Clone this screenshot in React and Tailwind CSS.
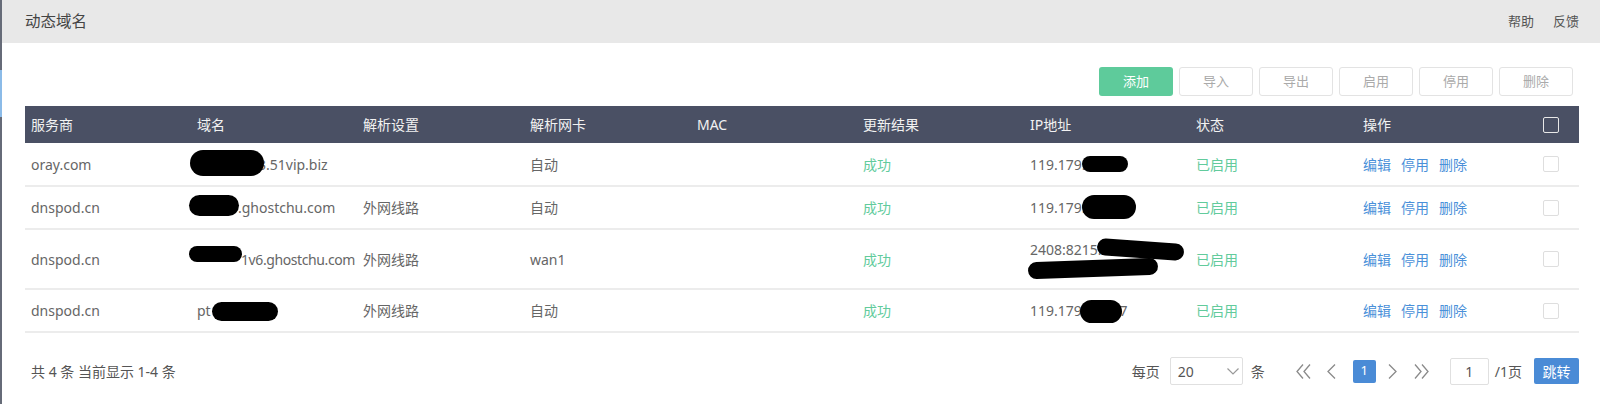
const cols = [
    { label: "服务商", w: "w-[166px]" },
    { label: "域名", w: "w-[166px]" },
    { label: "解析设置", w: "w-[167px]" },
    { label: "解析网卡", w: "w-[167px]" },
    { label: "MAC", w: "w-[166px]" },
    { label: "更新结果", w: "w-[167px]" },
    { label: "IP地址", w: "w-[166px]" },
    { label: "状态", w: "w-[167px]" },
    { label: "操作", w: "w-[166px]" },
];

// black marker strokes that hide parts of the text
function Blob({ className }) {
    return <span className={`absolute rounded-full bg-black ${className}`} />;
}

function Arrow({ double, right }) {
    const w = double ? 15 : 9;
    const d = double
        ? right
            ? "M1 0.5 L7 7.5 L1 14.5 M8 0.5 L14 7.5 L8 14.5"
            : "M7 0.5 L1 7.5 L7 14.5 M14 0.5 L8 7.5 L14 14.5"
        : right
          ? "M1 0.5 L8 7.5 L1 14.5"
          : "M8 0.5 L1 7.5 L8 14.5";
    return (
        <svg width={w} height="15" viewBox={`0 0 ${w} 15`} fill="none" stroke="#8a8a8a" strokeWidth="1.3">
            <path d={d} />
        </svg>
    );
}

const rows = [
    {
        vendor: "oray.com",
        domain: (
            <>
                <span className="pl-[61px]">3.51vip.biz</span>
                <Blob className="left-[-1px] top-[7px] h-[26px] w-[74px] rounded-[40%_50%_50%_45%]" />
            </>
        ),
        line: "",
        nic: "自动",
        ip: (
            <>
                <span>119.179.</span>
                <Blob className="left-[58px] top-[13px] h-[16px] w-[46px]" />
            </>
        ),
        h: "h-[43px]",
    },
    {
        vendor: "dnspod.cn",
        domain: (
            <>
                <span className="pl-[41px]">.ghostchu.com</span>
                <Blob className="left-[-2px] top-[8px] h-[21px] w-[50px]" />
            </>
        ),
        line: "外网线路",
        nic: "自动",
        ip: (
            <>
                <span>119.179.</span>
                <Blob className="left-[58px] top-[8px] h-[24px] w-[54px] rounded-[45%]" />
            </>
        ),
        h: "h-[43px]",
    },
    {
        vendor: "dnspod.cn",
        domain: (
            <>
                <span className="pl-[44px] tracking-[-0.4px]">1v6.ghostchu.com</span>
                <Blob className="left-[-2px] top-[16px] h-[16px] w-[53px]" />
            </>
        ),
        line: "外网线路",
        nic: "wan1",
        ip: (
            <>
                <span className="block leading-[19px]">2408:8215:</span>
                <span className="block leading-[19px]">&nbsp;</span>
                <Blob className="left-[73px] top-[11px] h-[17px] w-[87px] rotate-[4deg]" />
                <Blob className="left-[4px] top-[30px] h-[17px] w-[130px] -rotate-[2deg]" />
            </>
        ),
        h: "h-[60px]",
    },
    {
        vendor: "dnspod.cn",
        domain: (
            <>
                <span>pt</span>
                <Blob className="left-[21px] top-[12px] h-[19px] w-[66px]" />
            </>
        ),
        line: "外网线路",
        nic: "自动",
        ip: (
            <>
                <span>119.179.</span>
                <span className="pl-[34px]">7</span>
                <Blob className="left-[56px] top-[10px] h-[23px] w-[42px] rounded-[45%]" />
            </>
        ),
        h: "h-[43px]",
    },
];

const tools = ["导入", "导出", "启用", "停用", "删除"];

export default function App() {
    return (
        <div className="flex h-[404px] w-[1600px] overflow-hidden bg-white font-['Noto_Sans','Noto_Sans_CJK_SC',sans-serif] text-[14px] text-[#666]">
            <div className="flex w-[2px] flex-col">
                <div className="h-[70px] bg-[#666b78]" />
                <div className="h-[47px] bg-[#8bbbe8]" />
                <div className="flex-1 bg-[#666b78]" />
            </div>

            <div className="flex min-w-0 flex-1 flex-col">
                <header className="flex h-[43px] items-center justify-between bg-[#e8e8e8] pl-[23px] pr-[21px]">
                    <h1 className="text-[15.5px] text-[#444]">动态域名</h1>
                    <div className="flex gap-[19px] text-[13px] text-[#555]">
                        <span>帮助</span>
                        <span>反馈</span>
                    </div>
                </header>

                <div className="pl-[23px] pr-[21px]">
                    <div className="mt-[24px] flex justify-end gap-[6px] pr-[6px]">
                        <button
                            type="button"
                            className="h-[29px] w-[74px] rounded-[3px] bg-[#5ecb9b] text-[13px] text-white"
                        >
                            添加
                        </button>
                        {tools.map((t) => (
                            <button
                                key={t}
                                type="button"
                                className="h-[29px] w-[74px] rounded-[3px] border border-[#e3e3e3] bg-white text-[13px] text-[#aaa]"
                            >
                                {t}
                            </button>
                        ))}
                    </div>

                    <table className="mt-[10px] w-[1554px] table-fixed border-collapse">
                        <thead>
                            <tr className="h-[37px] bg-[#4a5064] text-left text-[14px] text-[#f2f2f2]">
                                {cols.map((c) => (
                                    <th key={c.label} className={`${c.w} pl-[6px] font-normal`}>
                                        {c.label}
                                    </th>
                                ))}
                                <th className="w-[56px]">
                                    <span className="mx-auto block h-[16px] w-[16px] rounded-[2px] border border-[#e8e8e8]" />
                                </th>
                            </tr>
                        </thead>
                        <tbody>
                            {rows.map((r, i) => (
                                <tr key={i} className={`${r.h} border-b-2 border-[#ececec]`}>
                                    <td className="pl-[6px]">{r.vendor}</td>
                                    <td className="relative pl-[6px]">{r.domain}</td>
                                    <td className="pl-[6px]">{r.line}</td>
                                    <td className="pl-[6px]">{r.nic}</td>
                                    <td className="pl-[6px]" />
                                    <td className="pl-[6px] text-[#62cb9c]">成功</td>
                                    <td className="relative pl-[6px]">{r.ip}</td>
                                    <td className="pl-[6px] text-[#62cb9c]">已启用</td>
                                    <td className="pl-[6px] text-[#4a90d9]">
                                        <span className="mr-[10px]">编辑</span>
                                        <span className="mr-[10px]">停用</span>
                                        <span>删除</span>
                                    </td>
                                    <td>
                                        <span className="mx-auto block h-[16px] w-[16px] rounded-[2px] border border-[#dedede]" />
                                    </td>
                                </tr>
                            ))}
                        </tbody>
                    </table>

                    <div className="mt-[24px] flex h-[28px] items-center justify-between pl-[6px] text-[14px] text-[#555]">
                        <span>共 4 条 当前显示 1-4 条</span>
                        <div className="flex items-center">
                            <span>每页</span>
                            <div className="ml-[10px] flex h-[28px] w-[73px] items-center justify-between rounded-[2px] border border-[#e0e0e0] pl-[7px] pr-[3px]">
                                <span>20</span>
                                <svg width="12" height="7" viewBox="0 0 12 7" fill="none" stroke="#999" strokeWidth="1.2">
                                    <path d="M0.5 0.5 L6 6 L11.5 0.5" />
                                </svg>
                            </div>
                            <span className="ml-[8px]">条</span>
                            <div className="ml-[31px] flex items-center">
                                <Arrow double />
                                <span className="ml-[16px]">
                                    <Arrow />
                                </span>
                                <span className="ml-[17px] flex h-[23px] w-[23px] items-center justify-center rounded-[2px] bg-[#4a8bd6] text-[13px] text-white">
                                    1
                                </span>
                                <span className="ml-[12px]">
                                    <Arrow right />
                                </span>
                                <span className="ml-[17px]">
                                    <Arrow double right />
                                </span>
                            </div>
                            <div className="ml-[21px] flex h-[27px] w-[39px] items-center justify-center rounded-[2px] border border-[#e0e0e0]">
                                1
                            </div>
                            <span className="ml-[6px]">/1页</span>
                            <button
                                type="button"
                                className="ml-[12px] h-[26px] w-[45px] rounded-[2px] bg-[#4a8bd6] text-[14px] text-white"
                            >
                                跳转
                            </button>
                        </div>
                    </div>
                </div>
            </div>
        </div>
    );
}
